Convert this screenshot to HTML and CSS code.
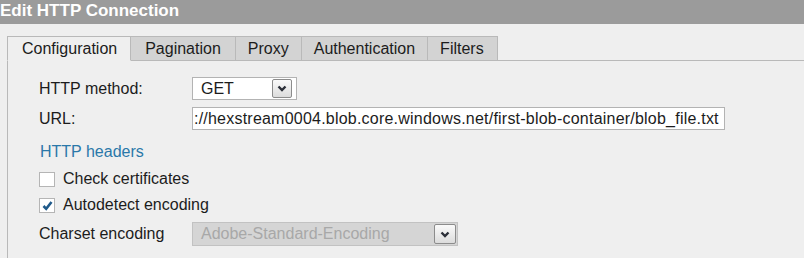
FILE: index.html
```html
<!DOCTYPE html>
<html lang="en">
<head>
    <meta charset="UTF-8">
    <title>Edit HTTP Connection</title>
    <link rel="stylesheet" href="styles.css">
</head>
<body>
    <!-- Dialog title -->
    <div class="titlebar">Edit HTTP Connection</div>

    <div class="dialog">
        <!-- Tabs -->
        <div class="tabs">
            <div class="tab active">Configuration</div>
            <div class="tab tab-pagination">Pagination</div>
            <div class="tab tab-proxy">Proxy</div>
            <div class="tab tab-auth">Authentication</div>
            <div class="tab tab-filters">Filters</div>
            <div class="tab-rest"></div>
        </div>

        <!-- Configuration panel -->
        <div class="panel">
            <div class="row row-method">
                <span class="label">HTTP method:</span>
                <div class="select select-method">
                    <span class="value">GET</span>
                    <span class="drop">
                        <svg width="10" height="7" viewBox="0 0 10 7"><path d="M1.5 1.5 L5 5 L8.5 1.5" fill="none" stroke="#2b2f38" stroke-width="2.4"/></svg>
                    </span>
                </div>
            </div>
            <div class="row row-url">
                <span class="label">URL:</span>
                <div class="textbox">://hexstream0004.blob.core.windows.net/first-blob-container/blob_file.txt</div>
            </div>

            <a class="link" href="#">HTTP headers</a>

            <div class="check-row first">
                <span class="checkbox"></span>
                <span>Check certificates</span>
            </div>
            <div class="check-row">
                <span class="checkbox">
                    <svg width="13" height="13" viewBox="0 0 13 13"><path d="M2.5 7 L5.2 9.8 L10.5 3" fill="none" stroke="#1f5a8a" stroke-width="2.6"/></svg>
                </span>
                <span>Autodetect encoding</span>
            </div>

            <div class="row row-charset">
                <span class="label">Charset encoding</span>
                <div class="select select-charset disabled">
                    <span class="value">Adobe-Standard-Encoding</span>
                    <span class="drop">
                        <svg width="10" height="7" viewBox="0 0 10 7"><path d="M1.5 1.5 L5 5 L8.5 1.5" fill="none" stroke="#2b2f38" stroke-width="2.4"/></svg>
                    </span>
                </div>
            </div>
        </div>
    </div>
</body>
</html>
```

FILE: styles.css
```css
/* Base */
body {
    margin: 0;
    background-color: #efefef;
    font-family: "Liberation Sans", Arial, sans-serif;
    font-size: 16px;
    color: #1c1c1c;
    overflow: hidden;
}

/* Title bar */
.titlebar {
    height: 24px;
    line-height: 22px;
    background-color: #9b9b9b;
    color: #fff;
    font-size: 17px;
    font-weight: bold;
    white-space: nowrap;
}

.dialog {
    padding: 12px 0 0 7px;
}

/* Tabs */
.tabs {
    display: flex;
    height: 25px;
}

.tab {
    padding: 0 14px;
    line-height: 24px;
    background-color: #d3d3d3;
    border: 1px solid #b9b9b9;
    border-left: none;
    color: #1c1c1c;
    white-space: nowrap;
}

.tab.active {
    background-color: #efefef;
    border-left: 1px solid #b9b9b9;
    border-bottom-color: #efefef;
    padding: 0 13px 0 14px;
}

.tab-proxy {
    padding: 0 12px;
}

.tab-auth {
    padding: 0 12px;
}

.tab-filters {
    padding: 0 13px 0 12px;
}

.tab-rest {
    flex: 1;
    border-bottom: 1px solid #b9b9b9;
}

/* Panel */
.panel {
    border-left: 1px solid #b9b9b9;
    padding: 16px 0 20px 31px;
    display: flex;
    flex-direction: column;
}

.row {
    display: flex;
    align-items: center;
}

.row-url {
    margin-top: 7px;
}

.row-charset {
    margin-top: 8px;
}

.label {
    width: 153px;
    flex-shrink: 0;
}

/* Select boxes */
.select {
    height: 23px;
    box-sizing: border-box;
    border: 1px solid #b3b3b3;
    background-color: #fff;
    display: flex;
    align-items: center;
    justify-content: space-between;
    padding: 0 4px 0 8px;
}

.select-method {
    width: 105px;
}

.select-charset {
    width: 266px;
    height: 24px;
    padding-right: 1px;
}

.select.disabled {
    background-color: #d5d5d5;
    color: #a8a8a8;
    border-color: #c2c2c2;
}

.drop {
    width: 20px;
    height: 19px;
    box-sizing: border-box;
    border: 1px solid #8c8c8c;
    border-radius: 2px;
    background: linear-gradient(#fafafa, #dcdcdc);
    display: flex;
    align-items: center;
    justify-content: center;
}

.select-charset .drop {
    width: 22px;
    height: 20px;
}

/* URL field */
.textbox {
    width: 533px;
    height: 23px;
    box-sizing: border-box;
    border: 1px solid #b3b3b3;
    background-color: #fff;
    line-height: 21px;
    padding-left: 1px;
    letter-spacing: 0.22px;
    white-space: nowrap;
    overflow: hidden;
}

/* Link */
.link {
    margin-top: 13px;
    color: #2a78a9;
    text-decoration: none;
    align-self: flex-start;
    padding-left: 1px;
    line-height: 18px;
}

/* Checkboxes */
.check-row {
    display: flex;
    align-items: center;
    gap: 8px;
    height: 18px;
    margin-top: 8px;
}

.check-row.first {
    margin-top: 9px;
}

.checkbox {
    width: 16px;
    height: 15px;
    box-sizing: border-box;
    border: 1px solid #b5b5b5;
    background-color: #fff;
    display: flex;
    align-items: center;
    justify-content: center;
}
```
